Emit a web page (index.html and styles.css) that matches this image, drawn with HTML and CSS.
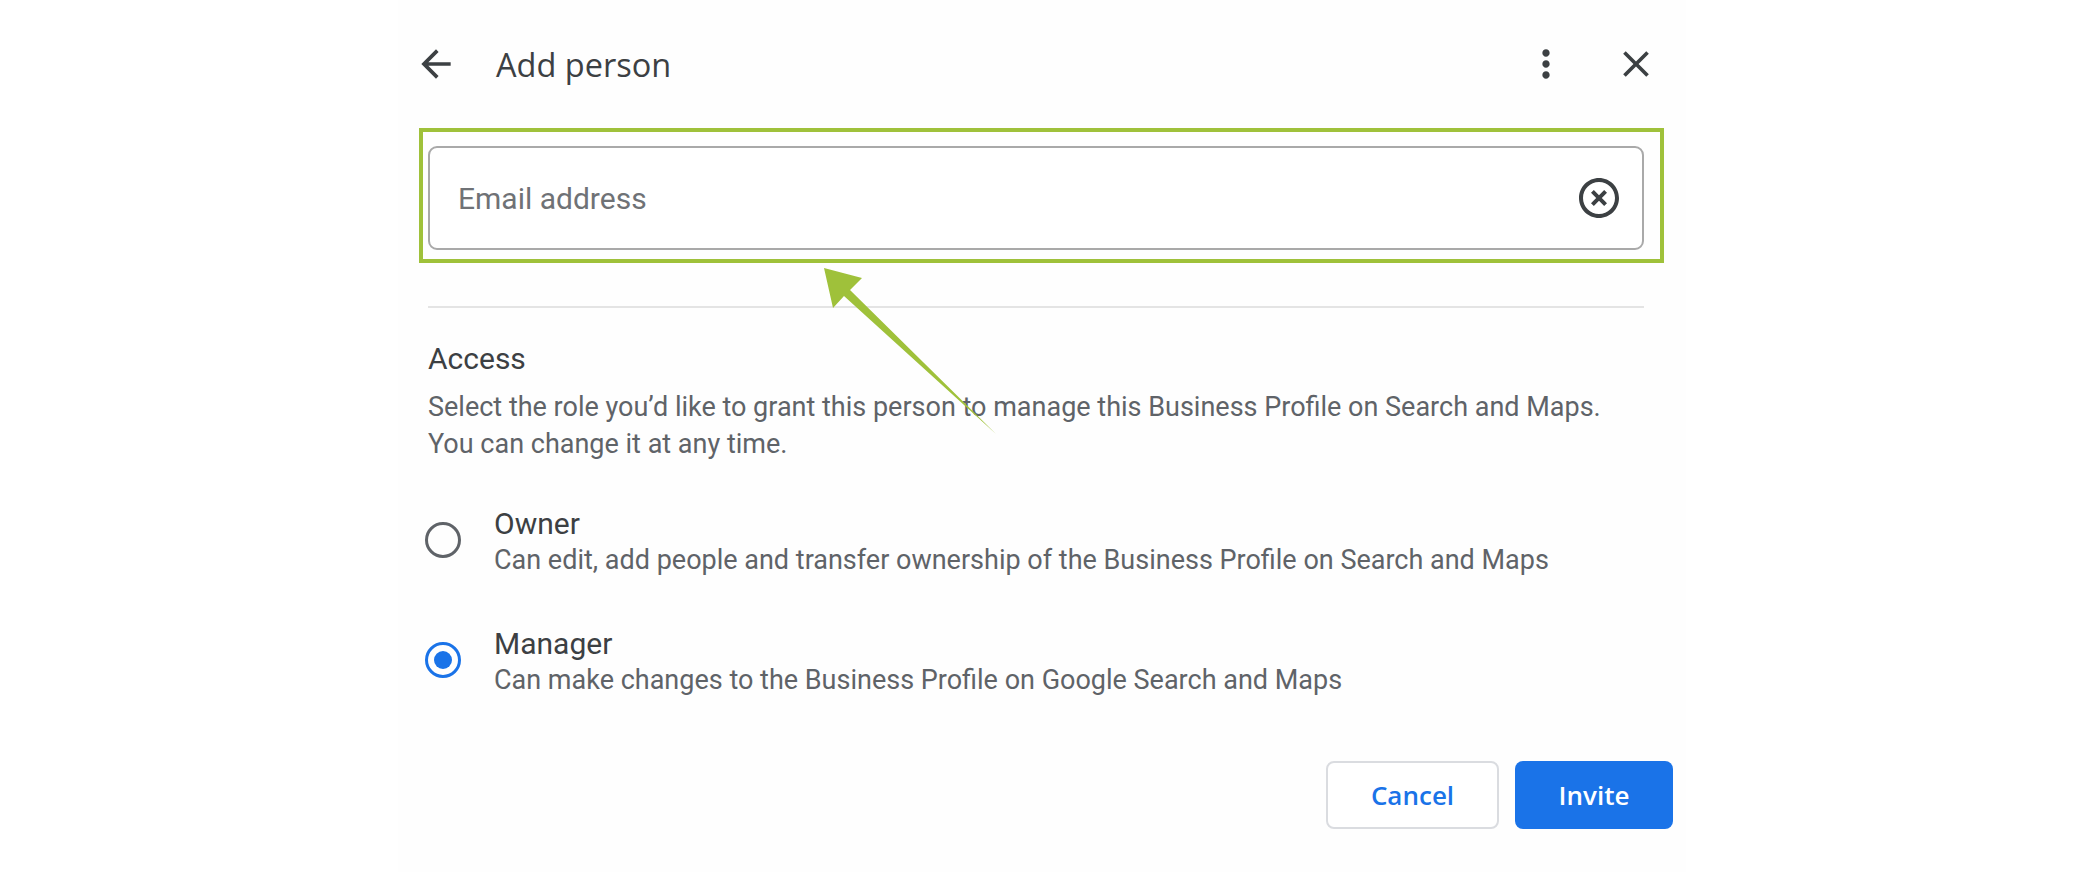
FILE: index.html
```html
<!DOCTYPE html>
<html lang="en">
<head>
<meta charset="utf-8">
<title>Add person</title>
<link rel="stylesheet" href="styles.css">
</head>
<body>
<div class="stage">
  <div class="dialog">
    <header class="header">
      <svg class="icon" viewBox="0 0 24 24"><path d="M20 11H7.830l5.59-5.590L12 4l-8 8 8 8 1.410-1.410L7.830 13H20v-2z"/></svg>
      <h1 class="title">Add person</h1>
      <div class="spacer"></div>
      <svg class="icon" viewBox="0 0 24 24"><path d="M12 8c1.1 0 2-.9 2-2s-.9-2-2-2-2 .9-2 2 .9 2 2 2zm0 2c-1.1 0-2 .9-2 2s.9 2 2 2 2-.9 2-2-.9-2-2-2zm0 6c-1.1 0-2 .9-2 2s.9 2 2 2 2-.9 2-2-.9-2-2-2z"/></svg>
      <svg class="icon close" viewBox="0 0 24 24"><path d="M19 6.41L17.59 5 12 10.59 6.41 5 5 6.41 10.59 12 5 17.59 6.41 19 12 13.41 17.59 19 19 17.59 13.41 12z"/></svg>
    </header>
    <main class="body">
      <div class="field-wrap">
        <div class="field">
          <span class="placeholder">Email address</span>
          <svg class="clear" viewBox="0 0 24 24"><path d="M14.59 8L12 10.59 9.41 8 8 9.41 10.59 12 8 14.59 9.41 16 12 13.41 14.59 16 16 14.59 13.41 12 16 9.41 14.59 8zM12 2C6.47 2 2 6.47 2 12s4.47 10 10 10 10-4.470 10-10S17.53 2 12 2zm0 18c-4.41 0-8-3.59-8-8s3.59-8 8-8 8 3.59 8 8-3.59 8-8 8z"/></svg>
        </div>
        <div class="highlight"></div>
      </div>
      <div class="divider"></div>
      <h2 class="access">Access</h2>
      <p class="desc">Select the role you’d like to grant this person to manage this Business Profile on Search and Maps.<br>You can change it at any time.</p>
      <div class="roles">
        <div class="role">
          <span class="radio"></span>
          <div class="role-text">
            <div class="role-title">Owner</div>
            <div class="role-desc">Can edit, add people and transfer ownership of the Business Profile on Search and Maps</div>
          </div>
        </div>
        <div class="role">
          <span class="radio checked"></span>
          <div class="role-text">
            <div class="role-title">Manager</div>
            <div class="role-desc">Can make changes to the Business Profile on Google Search and Maps</div>
          </div>
        </div>
      </div>
      <div class="actions">
        <button class="btn btn-cancel">Cancel</button>
        <button class="btn btn-invite">Invite</button>
      </div>
    </main>
  </div>
  <svg class="pointer" viewBox="0 0 2084 872" width="2084" height="872">
    <polygon points="824,268 862,278 850,290 996,434 844,296 833,308" fill="#9fc13a"/>
  </svg>
</div>
</body>
</html>
```

FILE: styles.css
```css
* { box-sizing: border-box; }
html, body { margin: 0; padding: 0; background: #ffffff; }
body { font-family: Roboto, "Liberation Sans", sans-serif; }

.stage {
  position: relative;
  width: 2084px;
  height: 872px;
  overflow: hidden;
  background: #ffffff;
}

.dialog {
  width: 1288px;
  height: 872px;
  margin: 0 auto;
  background: #fefefe;
}

.header {
  display: flex;
  align-items: center;
  height: 128px;
  padding: 0 28px 0 16px;
}

.icon {
  width: 44px;
  height: 44px;
  fill: #3c4043;
  flex: none;
}
.icon.close { margin-left: 46px; }

.title {
  margin: 0 0 0 38px;
  font-family: "Open Sans", Roboto, sans-serif;
  font-weight: 400;
  font-size: 32.5px;
  color: #3c4043;
}

.spacer { flex: 1; }

.body {
  padding: 0 42px 0 30px;
}

.field-wrap {
  position: relative;
  margin-top: 18px;
}

.field {
  display: flex;
  align-items: center;
  justify-content: space-between;
  height: 104px;
  border: 2px solid #a9a9a9;
  border-radius: 9px;
  padding: 0 19px 0 28px;
  background: #fff;
}

.placeholder {
  font-size: 30px;
  color: #6f7276;
}

.clear {
  width: 48px;
  height: 48px;
  fill: #3c4043;
}

.highlight {
  position: absolute;
  left: -9px;
  top: -18px;
  right: -20px;
  bottom: -13px;
  border: 4px solid #9fc13a;
  pointer-events: none;
}

.divider {
  margin-top: 56px;
  height: 2px;
  background: #e4e4e4;
}

.access {
  margin: 33px 0 0;
  font-size: 30px;
  font-weight: 400;
  line-height: 36px;
  color: #3c4043;
}

.desc {
  margin: 12px 0 0;
  font-size: 27px;
  line-height: 37px;
  color: #5f6368;
}

.roles {
  display: flex;
  flex-direction: column;
  gap: 46px;
  margin-top: 42px;
}

.role {
  display: flex;
  align-items: center;
  gap: 33px;
  margin-left: -3px;
}

.radio {
  width: 36px;
  height: 36px;
  flex: none;
  margin-bottom: 5px;
  border: 3px solid #5f6368;
  border-radius: 50%;
  display: flex;
  align-items: center;
  justify-content: center;
}
.radio.checked { border-color: #1a73e8; border-width: 3.5px; }
.radio.checked::after {
  content: "";
  width: 18px;
  height: 18px;
  border-radius: 50%;
  background: #1a73e8;
}

.role-title {
  font-size: 30px;
  line-height: 37px;
  color: #3c4043;
}

.role-desc {
  font-size: 27px;
  line-height: 37px;
  color: #5f6368;
}

.actions {
  display: flex;
  justify-content: flex-end;
  gap: 16px;
  margin-top: 62px;
  margin-right: -29px;
}

.btn {
  height: 68px;
  border-radius: 8px;
  font-family: "Open Sans", Roboto, sans-serif;
  font-weight: 600;
  font-size: 26px;
  cursor: pointer;
}

.btn-cancel {
  width: 173px;
  background: #fff;
  border: 2px solid #dadce0;
  color: #1a73e8;
}

.btn-invite {
  width: 158px;
  background: #1a73e8;
  border: none;
  color: #fff;
}

.pointer {
  position: absolute;
  left: 0;
  top: 0;
  pointer-events: none;
}
```
